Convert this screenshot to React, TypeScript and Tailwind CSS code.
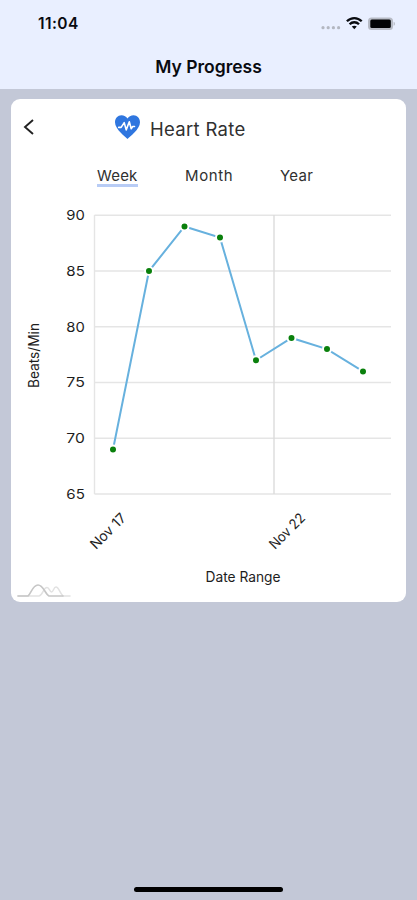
const points = [
  { x: 113, value: 69 },
  { x: 149, value: 85 },
  { x: 184.5, value: 89 },
  { x: 220, value: 88 },
  { x: 256, value: 77 },
  { x: 291.5, value: 79 },
  { x: 327, value: 78 },
  { x: 363, value: 76 },
];

const ticks = [90, 85, 80, 75, 70, 65];

const xLabels = [
  { x: 127, label: 'Nov 17' },
  { x: 306, label: 'Nov 22' },
];

const toY = (value: number) => 215.3 + (90 - value) * 11.15;

function StatusBar() {
  return (
    <div className="flex h-[46px] items-center justify-between pl-[38px] pr-[22px] pt-px">
      <span className="text-[15.5px] font-semibold tracking-[0.4px]">11:04</span>
      <svg width="74" height="16" viewBox="0 0 74 16">
        <g fill="#b3b7c1">
          <circle cx="2" cy="11.7" r="1.6" />
          <circle cx="7.2" cy="11.7" r="1.6" />
          <circle cx="12.4" cy="11.7" r="1.6" />
          <circle cx="17.6" cy="11.7" r="1.6" />
        </g>
        <g fill="none" stroke="#090b10" strokeWidth="2.3">
          <path d="M25.9 5.3C30.2 1 36.4 1 40.7 5.3" />
          <path d="M28.6 8.2C31.2 5.6 35.4 5.6 38 8.2" />
        </g>
        <path d="M30.8 10.6C32.3 9.3 34.3 9.3 35.8 10.6L33.3 13.2Z" fill="#090b10" />
        <rect x="47" y="1.5" width="25" height="12.5" rx="3.5" fill="#b7bbc5" />
        <rect x="49.3" y="3.5" width="20.5" height="8.5" rx="1.5" fill="#020305" />
        <path d="M72.6 5.7C74.4 6.4 74.4 9.1 72.6 9.8Z" fill="#b7bbc5" />
      </svg>
    </div>
  );
}

function HeartIcon() {
  return (
    <svg className="shrink-0" width="27" height="26" viewBox="0 0 27 26">
      <path
        d="M13.5 25C11.7 23 1 15.4 1 8.3C1 4.2 3.8 1.3 7.4 1.3C10.1 1.3 12.4 2.7 13.5 4.5C14.6 2.7 16.9 1.3 19.6 1.3C23.2 1.3 26 4.2 26 8.3C26 15.4 15.3 23 13.5 25Z"
        fill="#2f76df"
      />
      <path
        d="M4.7 13.4H7.1L10.2 8.6L12.2 15.9L15.3 7.8L17.2 14.8L18.7 12.5H20.5"
        fill="none"
        stroke="#fff"
        strokeWidth="1.6"
        strokeLinejoin="round"
        strokeLinecap="round"
      />
    </svg>
  );
}

function Chart() {
  return (
    <svg
      className="block font-[Inter,sans-serif]"
      width="395"
      height="402"
      viewBox="11 200 395 402"
      fill="#1d1d1d"
    >
      <g stroke="#e5e5e5" strokeWidth="1.4">
        {ticks.map((tick) => (
          <line key={tick} x1="94.5" x2="391" y1={toY(tick)} y2={toY(tick)} />
        ))}
        <line x1="94.5" x2="94.5" y1="215" y2="494" />
        <line x1="274" x2="274" y1="215" y2="494" stroke="#dcdcdc" />
      </g>
      {ticks.map((tick) => (
        <text
          key={tick}
          x="66.3"
          y={toY(tick) + 4.7}
          fontSize="13.5"
          textLength="18.5"
          lengthAdjust="spacingAndGlyphs"
        >
          {tick}
        </text>
      ))}
      <polyline
        points={points.map((p) => `${p.x},${toY(p.value)}`).join(' ')}
        fill="none"
        stroke="#67b1de"
        strokeWidth="2"
      />
      {points.map((p) => (
        <circle key={p.x} cx={p.x} cy={toY(p.value)} r="4" fill="#0a800c" stroke="#fff" strokeWidth="2" />
      ))}
      {xLabels.map((item) => (
        <text
          key={item.label}
          transform={`translate(${item.x} 519) rotate(-45)`}
          textAnchor="end"
          fontSize="14"
          textLength="44"
          lengthAdjust="spacingAndGlyphs"
        >
          {item.label}
        </text>
      ))}
      <text
        transform="translate(39 388) rotate(-90)"
        fontSize="14"
        textLength="65"
        lengthAdjust="spacingAndGlyphs"
      >
        Beats/Min
      </text>
      <text x="205.5" y="582.3" fontSize="14" textLength="75" lengthAdjust="spacingAndGlyphs">
        Date Range
      </text>
      <g fill="none" strokeLinecap="round" strokeLinejoin="round">
        <path
          d="M18 596H39C43 595 43.5 587.5 47 587.5C49.5 587.5 49.5 592 51.5 592C53.5 592 53.5 587 56 587C59 587 59.5 593 63 596H70"
          stroke="#e2e2e2"
          strokeWidth="1.5"
        />
        <path d="M18 596H28C31 594 32.5 585 38 585C43.5 585 45 594 49 596H63" stroke="#c6c6c6" strokeWidth="1.6" />
      </g>
    </svg>
  );
}

export default function App() {
  return (
    <div className="flex h-[900px] w-[417px] flex-col bg-[#c3c8d7] font-[Inter,sans-serif] text-[#090b10]">
      <header className="h-[89px] shrink-0 bg-[#e9efff]">
        <StatusBar />
        <h1 className="text-center text-[17.5px] font-semibold leading-[42px]">My Progress</h1>
      </header>

      <main className="ml-[11px] mt-[10px] h-[503px] w-[395px] shrink-0 overflow-hidden rounded-[9px] bg-white text-[#303030]">
        <div className="flex h-[58px] items-center pb-0.5">
          <svg className="ml-3 shrink-0" width="12" height="18" viewBox="0 0 12 18">
            <path d="M10 2L2 9L10 16" fill="none" stroke="#222" strokeWidth="1.9" />
          </svg>
          <div className="ml-[79px] flex items-center gap-[9px]">
            <HeartIcon />
            <h2 className="pt-1 text-[18.5px] leading-6 tracking-[0.3px]">Heart Rate</h2>
          </div>
        </div>
        <nav className="flex h-[43px] items-start pl-[86px] pt-[9px] text-[15px] leading-5">
          <span className="h-[21px] w-[41px] border-b-[3px] border-[#b8ccf5] tracking-[0.2px]">Week</span>
          <span className="ml-[47px] w-[49px] tracking-[0.6px]">Month</span>
          <span className="ml-[46px] tracking-[0.3px]">Year</span>
        </nav>
        <Chart />
      </main>

      <div className="mx-auto mb-2 mt-auto h-[5px] w-[149px] rounded-full bg-black" />
    </div>
  );
}
